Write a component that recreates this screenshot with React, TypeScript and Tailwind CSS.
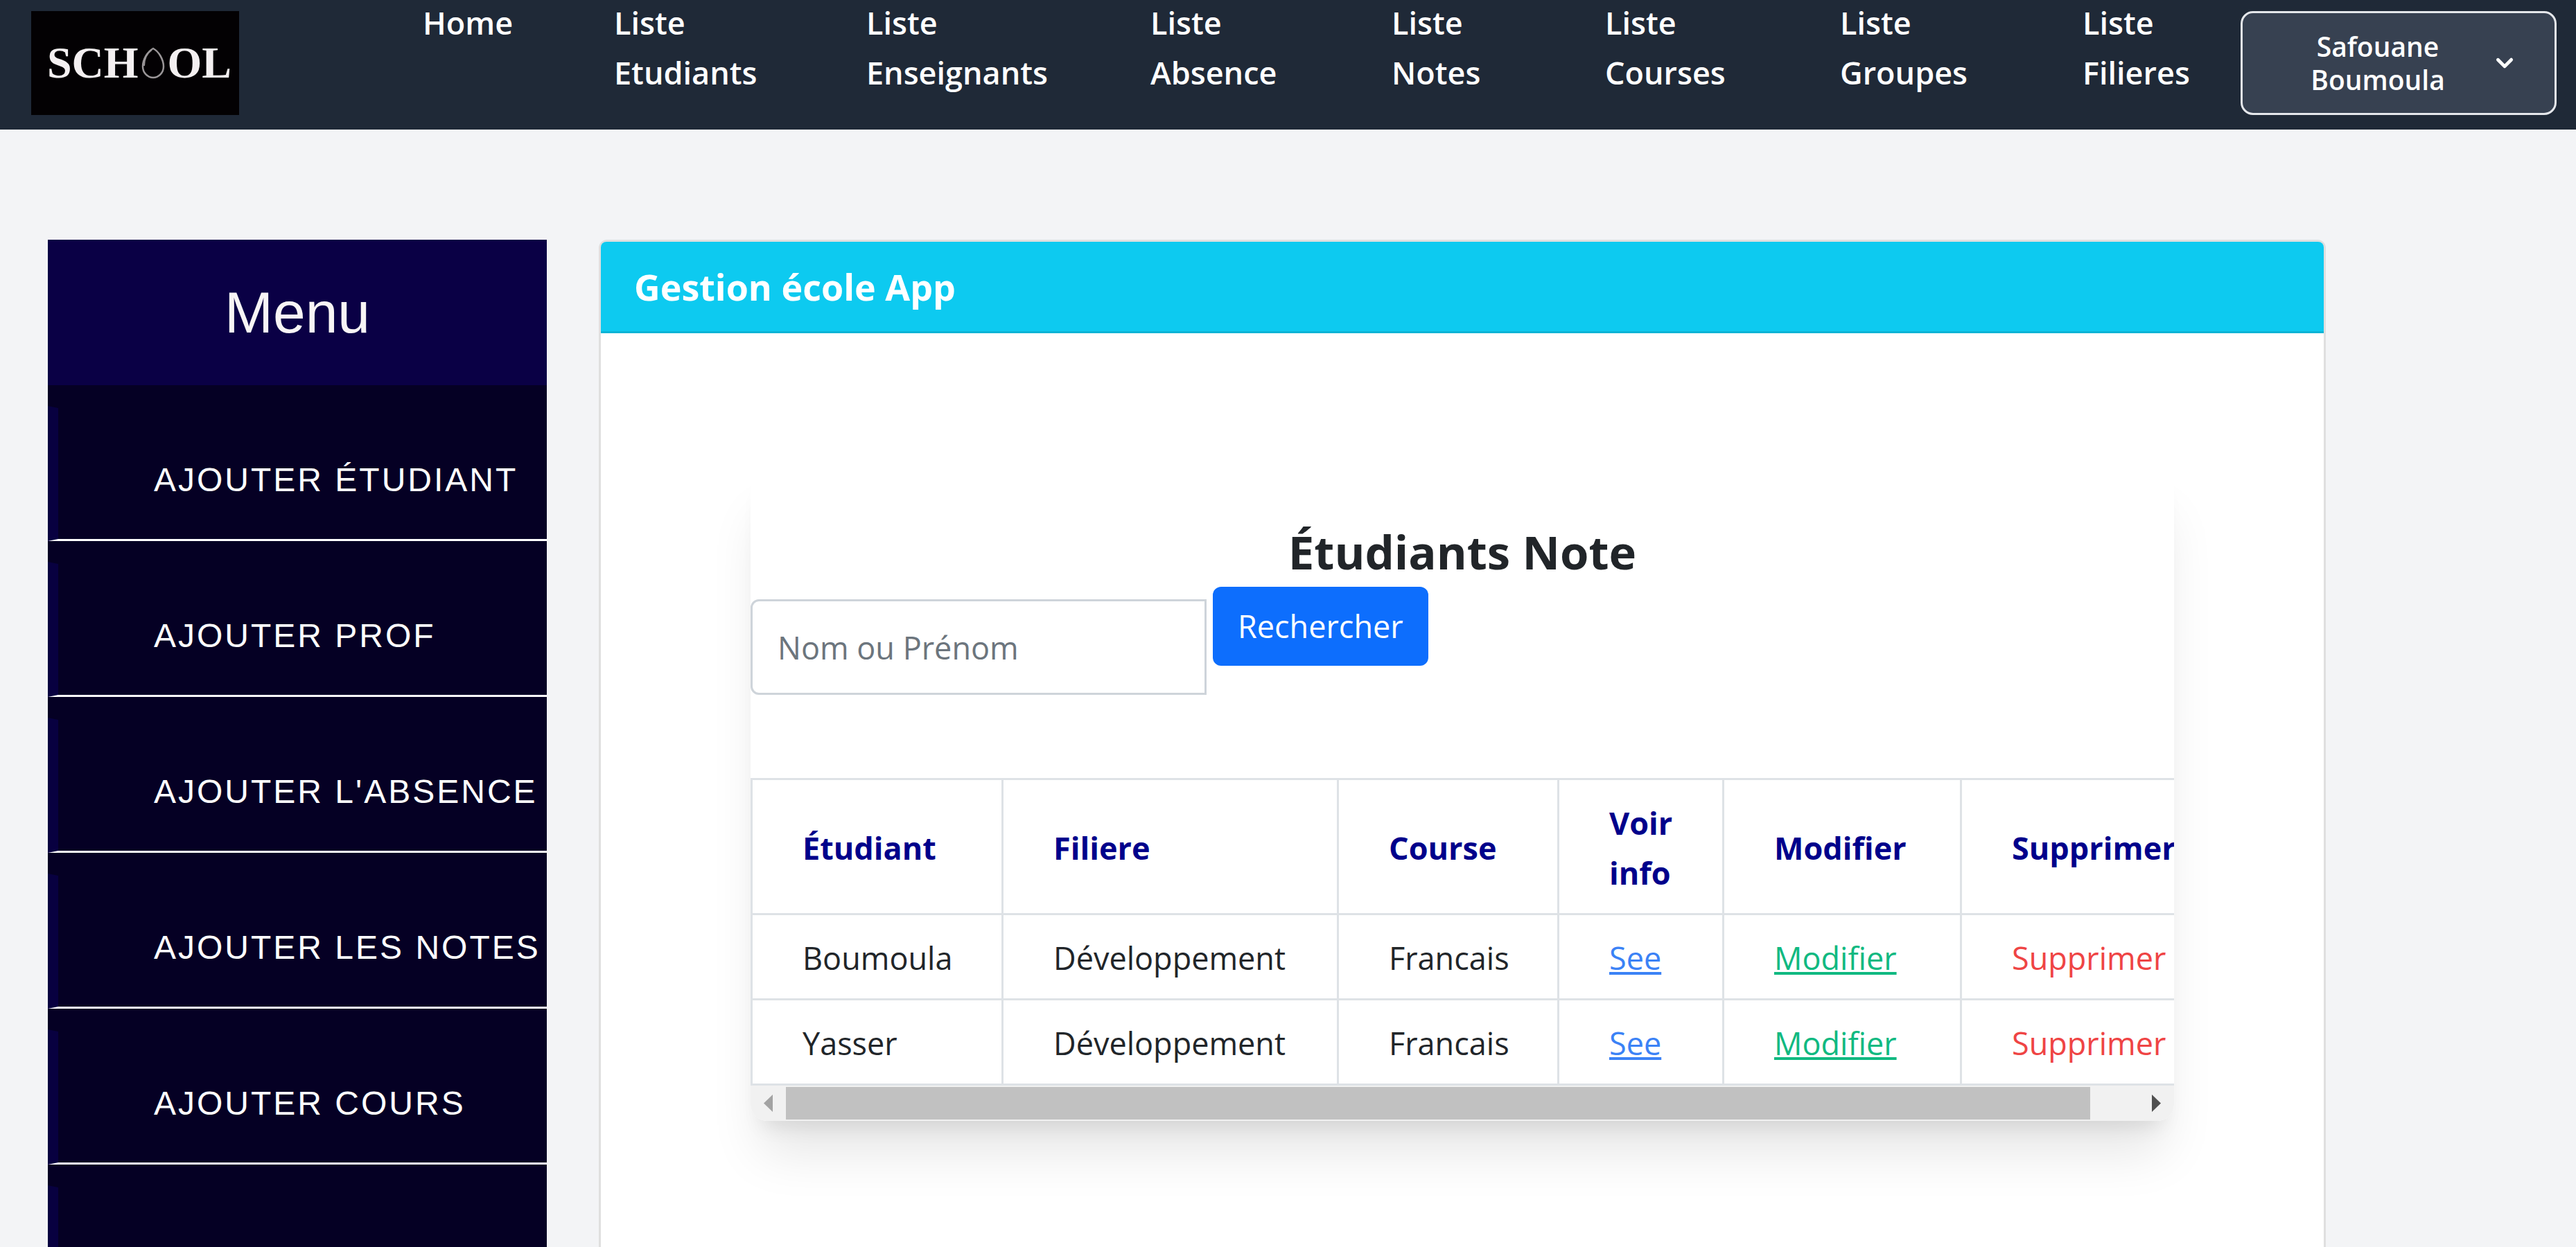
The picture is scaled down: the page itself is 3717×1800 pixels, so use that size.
import React from "react";

const SANS = "font-['Open_Sans','Noto_Sans',sans-serif]";

const navItems = [
  "Home",
  "Liste Etudiants",
  "Liste Enseignants",
  "Liste Absence",
  "Liste Notes",
  "Liste Courses",
  "Liste Groupes",
  "Liste Filieres",
];

const menuItems = [
  "AJOUTER ÉTUDIANT",
  "AJOUTER PROF",
  "AJOUTER L'ABSENCE",
  "AJOUTER LES NOTES",
  "AJOUTER COURS",
  "\u00a0",
];

const students = [
  { name: "Boumoula", filiere: "Développement", course: "Francais" },
  { name: "Yasser", filiere: "Développement", course: "Francais" },
];

const columns = ["Étudiant", "Filiere", "Course", "Voir info", "Modifier", "Supprimer"];

function Logo() {
  return (
    <a
      href="#"
      aria-label="School"
      className="flex h-[150px] w-[300px] shrink-0 items-center justify-center gap-1 bg-[#030103] pl-3 font-['Liberation_Serif',serif] text-[64px] leading-none font-bold text-[#f4f0f1]"
    >
      <span>SCH</span>
      <svg viewBox="0 0 34 46" className="h-[46px] w-[34px]" fill="none" stroke="#9a9698" strokeWidth="2.500">
        <path d="M17 2C9 6 2 18 2 28c0 9 7 16 15 16s15-7 15-16C32 18 25 6 17 2Z" />
        <path d="M15 4C8 9 4 17 4 27" strokeWidth="2" />
      </svg>
      <span>OL</span>
    </a>
  );
}

function Header() {
  return (
    <header className="flex h-[187px] items-start bg-[#1f2937] pt-4 pr-7 pl-[45px]">
      <Logo />
      <nav className="-mt-[19px] ml-[265px] flex-1">
        <ul className="grid grid-cols-[276fr_364fr_410fr_348fr_308fr_339fr_350fr_228fr]">
          {navItems.map((item) => (
            <li key={item}>
              <a href="#" className="block w-min text-[45px] leading-[72px] font-semibold text-white">
                {item}
              </a>
            </li>
          ))}
        </ul>
      </nav>
      <button
        type="button"
        className="flex h-[150px] w-[456px] shrink-0 items-center gap-3 rounded-[18px] border-3 border-[#e5e7eb] bg-[#374151] px-12 text-[39px] leading-12 font-semibold text-white"
      >
        <span className="flex-1 px-6 text-center">Safouane Boumoula</span>
        <svg viewBox="0 0 20 20" className="size-12" fill="currentColor" aria-hidden="true">
          <path d="M5.293 7.293a1 1 0 011.414 0L10 10.586l3.293-3.293a1 1 0 111.414 1.414l-4 4a1 1 0 01-1.414 0l-4-4a1 1 0 010-1.414z" />
        </svg>
      </button>
    </header>
  );
}

function Sidebar() {
  return (
    <aside className="w-[720px] shrink-0 bg-[#050024] font-['Liberation_Sans',Arial,sans-serif]">
      <h2 className="bg-[#0a0045] py-[42px] text-center text-[84px] leading-[126px] text-[#f8f5f5]">Menu</h2>
      <ul>
        {menuItems.map((item) => (
          <li key={item} className="pt-[30px]">
            <a
              href="#"
              className="block border-y-3 border-l-15 border-t-[#050024] border-b-white border-l-[#080040] pt-[68px] pb-[49px] pl-[138px] text-[48px] leading-[72px] tracking-[3px] whitespace-nowrap text-white"
            >
              {item}
            </a>
          </li>
        ))}
      </ul>
    </aside>
  );
}

function StudentTable() {
  const cell = "border-3 border-[#dee2e6] px-[72px] pt-[26px] pb-[22px]";
  return (
    <table className="w-[2132px] table-fixed border-collapse text-left text-[45px] leading-[72px]">
      <colgroup>
        <col className="w-[362px]" />
        <col className="w-[484px]" />
        <col className="w-[318px]" />
        <col className="w-[238px]" />
        <col className="w-[343px]" />
        <col className="w-[387px]" />
      </colgroup>
      <thead>
        <tr>
          {columns.map((column) => (
            <th key={column} scope="col" className={cell + " font-bold text-[#00008b]"}>
              {column}
            </th>
          ))}
        </tr>
      </thead>
      <tbody>
        {students.map((student) => (
          <tr key={student.name}>
            <td className={cell}>{student.name}</td>
            <td className={cell}>{student.filiere}</td>
            <td className={cell}>{student.course}</td>
            <td className={cell}>
              <a href="#" className="text-[#3b82f6] underline decoration-4 underline-offset-3">
                See
              </a>
            </td>
            <td className={cell}>
              <a href="#" className="text-[#10b981] underline decoration-4 underline-offset-3">
                Modifier
              </a>
            </td>
            <td className={cell}>
              <button type="button" className="text-[#ef4444]">
                Supprimer
              </button>
            </td>
          </tr>
        ))}
      </tbody>
    </table>
  );
}

function ScrollBar() {
  return (
    <div className="flex h-[51px] items-center bg-[#f1f1f1]">
      <svg viewBox="0 0 51 51" className="size-[51px] shrink-0" aria-hidden="true">
        <path d="M32 13v25L19 25.500z" fill="#a3a3a3" />
      </svg>
      <div className="flex-1">
        <div className="h-[47px] w-[96.4%] bg-[#c1c1c1]" />
      </div>
      <svg viewBox="0 0 51 51" className="size-[51px] shrink-0" aria-hidden="true">
        <path d="M19 13v25l13-12.500z" fill="#505050" />
      </svg>
    </div>
  );
}

export default function App() {
  return (
    <div className={"h-screen overflow-hidden bg-[#f3f4f6] text-[#212529] " + SANS}>
      <Header />
      <main className="flex items-start gap-[75px] pt-[159px] pr-[361px] pl-[69px]">
        <Sidebar />
        <section className="min-w-0 flex-1 rounded-xl border-3 border-[#dfdfdf] bg-white">
          <h1 className="rounded-t-lg border-b-3 border-[#0cb4d6] bg-[#0dcaf0] px-12 py-6 text-[52px] leading-[81px] font-bold text-white">
            Gestion école App
          </h1>
          <div className="px-[216px] pt-48 pb-[300px]">
            <div className="overflow-hidden rounded-3xl bg-white shadow-[0_60px_75px_-15px_rgb(0_0_0/0.1),0_24px_30px_-18px_rgb(0_0_0/0.1)]">
              <h2 className="pt-20 text-center text-[67px] leading-[86px] font-bold">Étudiants Note</h2>
              <form className="flex items-start gap-[9px] pt-2 pb-[120px]">
                <input
                  type="text"
                  aria-label="Nom ou Prénom"
                  placeholder="Nom ou Prénom"
                  className="mt-[18px] h-[138px] w-[658px] rounded-l-xl border-3 border-[#ced4da] bg-white px-9 text-[45px] placeholder:text-[#6c757d] placeholder:opacity-100"
                />
                <button
                  type="button"
                  className="h-[114px] rounded-xl bg-[#0d6efd] px-9 text-[45px] leading-[72px] text-white"
                >
                  Rechercher
                </button>
              </form>
              <StudentTable />
              <ScrollBar />
            </div>
          </div>
        </section>
      </main>
    </div>
  );
}
